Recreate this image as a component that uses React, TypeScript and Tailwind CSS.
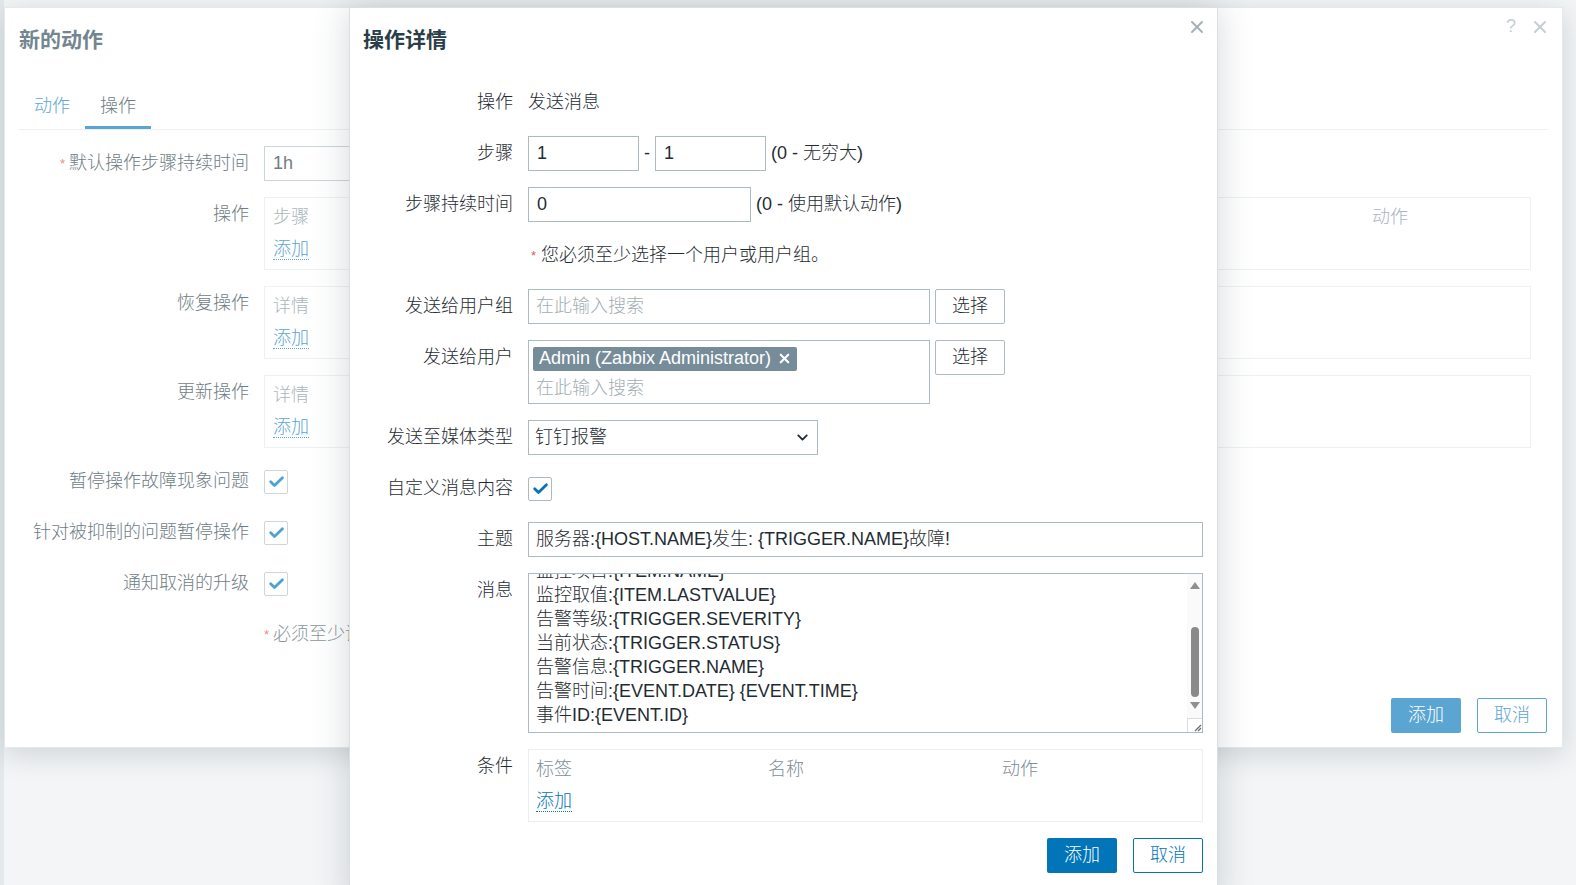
import React from 'react';
import { X, ChevronDown } from 'lucide-react';

const Check = ({ color }: { color: string }) => (
  <svg width="17" height="17" viewBox="0 0 16 16" fill="none">
    <path d="M2.5 8.2l3.6 3.6L13.6 4.4" stroke={color} strokeWidth="2.6" strokeLinecap="round" strokeLinejoin="round" />
  </svg>
);

const CheckBox = ({ faded }: { faded?: boolean }) => (
  <div
    className={
      faded
        ? 'w-[24px] h-[24px] border border-[#cdd6db] rounded-[2px] flex items-center justify-center'
        : 'w-[24px] h-[24px] border border-[#acbbc2] rounded-[2px] flex items-center justify-center'
    }
  >
    <Check color={faded ? '#4ea2d2' : '#0275b8'} />
  </div>
);

function BackDialog() {
  const opBox = (head: string, showAction: boolean) => (
    <div className="h-[73px] border border-[#eef1f3] pt-[7px] pl-[8px]">
      <div className="grid grid-cols-[1099px_auto] leading-[24px] text-[#aab6bc]">
        <span>{head}</span>
        {showAction && <span>动作</span>}
      </div>
      <div className="mt-[8px] leading-[24px]">
        <span className="text-[#5ba5d2] border-b border-dotted border-[#5ba5d2]">添加</span>
      </div>
    </div>
  );

  return (
    <div className="absolute left-[4px] top-[7px] w-[1559px] h-[741px] bg-white border border-[#e4e9ec] shadow-[0_6px_26px_rgba(40,60,70,0.18)] flex flex-col">
      <div className="h-[64px] flex items-start justify-between pl-[14px] pr-[12px]">
        <div className="text-[21px] font-bold text-[#73868f] leading-[64px]">新的动作</div>
        <div className="flex items-center gap-[14px] text-[#c6ced2] pt-[5px]">
          <span className="text-[18px]">?</span>
          <X size={20} strokeWidth={2.4} />
        </div>
      </div>
      <div className="mx-[14px] flex border-b border-[#eef1f3] text-[18px]">
        <div className="px-[15px] pt-[22px] pb-[8px] leading-[24px] text-[#5ea8d4] border-b-[3px] border-transparent">动作</div>
        <div className="px-[15px] pt-[22px] pb-[8px] leading-[24px] text-[#6f7d85] border-b-[3px] border-[#5ba5d2]">操作</div>
      </div>
      <div className="pt-[16px] px-[15px] grid grid-cols-[229px_1267px] gap-x-[15px] gap-y-[16px] text-[18px]">
        <div className="text-right leading-[35px] text-[#6f7d85]">
          <span className="text-[#ec8a8a] text-[13px] align-top mr-[4px]">*</span>默认操作步骤持续时间
        </div>
        <div>
          <div className="w-[420px] h-[35px] border border-[#cbd5da] px-[8px] leading-[33px] text-[#6f7d85]">1h</div>
        </div>

        <div className="text-right leading-[35px] text-[#6f7d85]">操作</div>
        {opBox('步骤', true)}

        <div className="text-right leading-[35px] text-[#6f7d85]">恢复操作</div>
        {opBox('详情', false)}

        <div className="text-right leading-[35px] text-[#6f7d85]">更新操作</div>
        {opBox('详情', false)}

        <div className="text-right leading-[35px] text-[#6f7d85]">暂停操作故障现象问题</div>
        <div className="h-[35px] flex items-center"><CheckBox faded /></div>

        <div className="text-right leading-[35px] text-[#6f7d85]">针对被抑制的问题暂停操作</div>
        <div className="h-[35px] flex items-center"><CheckBox faded /></div>

        <div className="text-right leading-[35px] text-[#6f7d85]">通知取消的升级</div>
        <div className="h-[35px] flex items-center"><CheckBox faded /></div>

        <div />
        <div className="leading-[35px] text-[#8a979e]">
          <span className="text-[#ec8a8a] text-[13px] align-top mr-[4px]">*</span>必须至少设置一个操作或恢复操作或更新操作。
        </div>
      </div>
      <div className="mt-auto pb-[14px] pr-[15px] flex justify-end gap-[16px] text-[18px]">
        <div className="w-[70px] h-[35px] rounded-[2px] bg-[#5ba5d2] text-white flex items-center justify-center">添加</div>
        <div className="w-[70px] h-[35px] rounded-[2px] border border-[#5ba5d2] text-[#5ba5d2] flex items-center justify-center">取消</div>
      </div>
    </div>
  );
}

const messageLines = [
  '监控项目:{ITEM.NAME}',
  '监控取值:{ITEM.LASTVALUE}',
  '告警等级:{TRIGGER.SEVERITY}',
  '当前状态:{TRIGGER.STATUS}',
  '告警信息:{TRIGGER.NAME}',
  '告警时间:{EVENT.DATE} {EVENT.TIME}',
  '事件ID:{EVENT.ID}',
];

function Label({ children }: { children: React.ReactNode }) {
  return <div className="text-right leading-[35px] text-[#1f2c33]">{children}</div>;
}

function FrontDialog() {
  return (
    <div className="absolute left-[349px] top-[7px] w-[869px] h-[900px] bg-white border border-[#d9dfe2] shadow-[0_0_34px_rgba(40,60,70,0.2)]">
      <div className="h-[64px] flex items-start justify-between pl-[13px] pr-[10px]">
        <div className="text-[21px] font-bold text-[#2b3d47] leading-[64px]">操作详情</div>
        <X size={20} strokeWidth={2.4} className="text-[#a6b1b7] mt-[9px]" />
      </div>
      <div className="pt-[13px] pl-[14px] grid grid-cols-[149px_675px] gap-x-[15px] gap-y-[16px] text-[18px] text-[#1f2c33]">
        <Label>操作</Label>
        <div className="leading-[35px]">发送消息</div>

        <Label>步骤</Label>
        <div className="flex items-center h-[35px]">
          <div className="w-[111px] h-[35px] border border-[#acbbc2] px-[8px] leading-[33px]">1</div>
          <div className="w-[16px] text-center">-</div>
          <div className="w-[111px] h-[35px] border border-[#acbbc2] px-[8px] leading-[33px]">1</div>
          <div className="ml-[5px]">(0 - 无穷大)</div>
        </div>

        <Label>步骤持续时间</Label>
        <div className="flex items-center h-[35px]">
          <div className="w-[223px] h-[35px] border border-[#acbbc2] px-[8px] leading-[33px]">0</div>
          <div className="ml-[5px]">(0 - 使用默认动作)</div>
        </div>

        <div />
        <div className="leading-[35px]">
          <span className="text-[#e45959] text-[13px] align-top mr-[5px] ml-[3px]">*</span>您必须至少选择一个用户或用户组。
        </div>

        <Label>发送给用户组</Label>
        <div className="flex gap-[5px]">
          <div className="w-[402px] h-[35px] border border-[#acbbc2] px-[7px] leading-[33px] text-[#a3aeb4]">在此输入搜索</div>
          <div className="w-[70px] h-[35px] border border-[#acbbc2] rounded-[2px] flex items-center justify-center">选择</div>
        </div>

        <Label>发送给用户</Label>
        <div className="flex gap-[5px] items-start">
          <div className="w-[402px] h-[64px] border border-[#acbbc2] p-[4px]">
            <div className="inline-flex items-center h-[24px] bg-[#768d99] text-white font-normal rounded-[2px] pl-[6px] pr-[5px] gap-[6px]">
              <span>Admin (Zabbix Administrator)</span>
              <X size={15} strokeWidth={3.4} />
            </div>
            <div className="mt-[4px] pl-[3px] leading-[24px] text-[#a3aeb4]">在此输入搜索</div>
          </div>
          <div className="w-[70px] h-[35px] border border-[#acbbc2] rounded-[2px] flex items-center justify-center">选择</div>
        </div>

        <Label>发送至媒体类型</Label>
        <div>
          <div className="w-[290px] h-[35px] border border-[#acbbc2] pl-[6px] pr-[6px] flex items-center justify-between">
            <span>钉钉报警</span>
            <ChevronDown size={17} strokeWidth={2.6} className="text-[#1f2c33]" />
          </div>
        </div>

        <Label>自定义消息内容</Label>
        <div className="h-[35px] flex items-center"><CheckBox /></div>

        <Label>主题</Label>
        <div className="h-[35px] border border-[#acbbc2] px-[7px] leading-[33px]">
          服务器:{'{HOST.NAME}'}发生: {'{TRIGGER.NAME}'}故障!
        </div>

        <Label>消息</Label>
        <div className="h-[160px] border border-[#acbbc2] flex">
          <div className="flex-1 overflow-hidden pl-[7px]">
            <div className="-mt-[15px] leading-[24px]">
              {messageLines.map((l) => (
                <div key={l}>{l}</div>
              ))}
            </div>
          </div>
          <div className="w-[15px] bg-[#fafafa] flex flex-col items-center">
            <div className="mt-[8px] w-0 h-0 border-l-[5px] border-r-[5px] border-b-[7px] border-l-transparent border-r-transparent border-b-[#8f8f8f]" />
            <div className="mt-[38px] w-[8px] h-[70px] rounded-full bg-[#8a8a8a]" />
            <div className="mt-[5px] w-0 h-0 border-l-[5px] border-r-[5px] border-t-[7px] border-l-transparent border-r-transparent border-t-[#8f8f8f]" />
            <div className="mt-auto w-[15px] h-[14px] border-l border-t border-[#dcdcdc] bg-white flex items-end justify-end">
              <svg width="10" height="10" viewBox="0 0 10 10">
                <path d="M9 3L3 9M9 6L6 9" stroke="#6b6b6b" strokeWidth="1.2" />
              </svg>
            </div>
          </div>
        </div>

        <Label>条件</Label>
        <div className="h-[73px] border border-[#ebeef0] pt-[7px] pl-[7px]">
          <div className="grid grid-cols-[232px_234px_auto] leading-[24px] text-[#7d8e97]">
            <span>标签</span>
            <span>名称</span>
            <span>动作</span>
          </div>
          <div className="mt-[8px] leading-[24px]">
            <span className="text-[#0275b8] border-b border-dotted border-[#0275b8]">添加</span>
          </div>
        </div>

        <div />
        <div className="flex justify-end gap-[16px]">
          <div className="w-[70px] h-[35px] rounded-[2px] bg-[#0275b8] text-white flex items-center justify-center">添加</div>
          <div className="w-[70px] h-[35px] rounded-[2px] border border-[#0275b8] text-[#0275b8] flex items-center justify-center">取消</div>
        </div>
      </div>
    </div>
  );
}

export default function App() {
  return (
    <div className="relative w-[1576px] h-[885px] overflow-hidden bg-[#f3f5f6] font-light font-[family-name:'Liberation_Sans','Noto_Sans_CJK_SC',sans-serif]">
      <div className="absolute left-0 top-0 w-[4px] h-full bg-[#e4e9eb]" />
      <BackDialog />
      <FrontDialog />
    </div>
  );
}
